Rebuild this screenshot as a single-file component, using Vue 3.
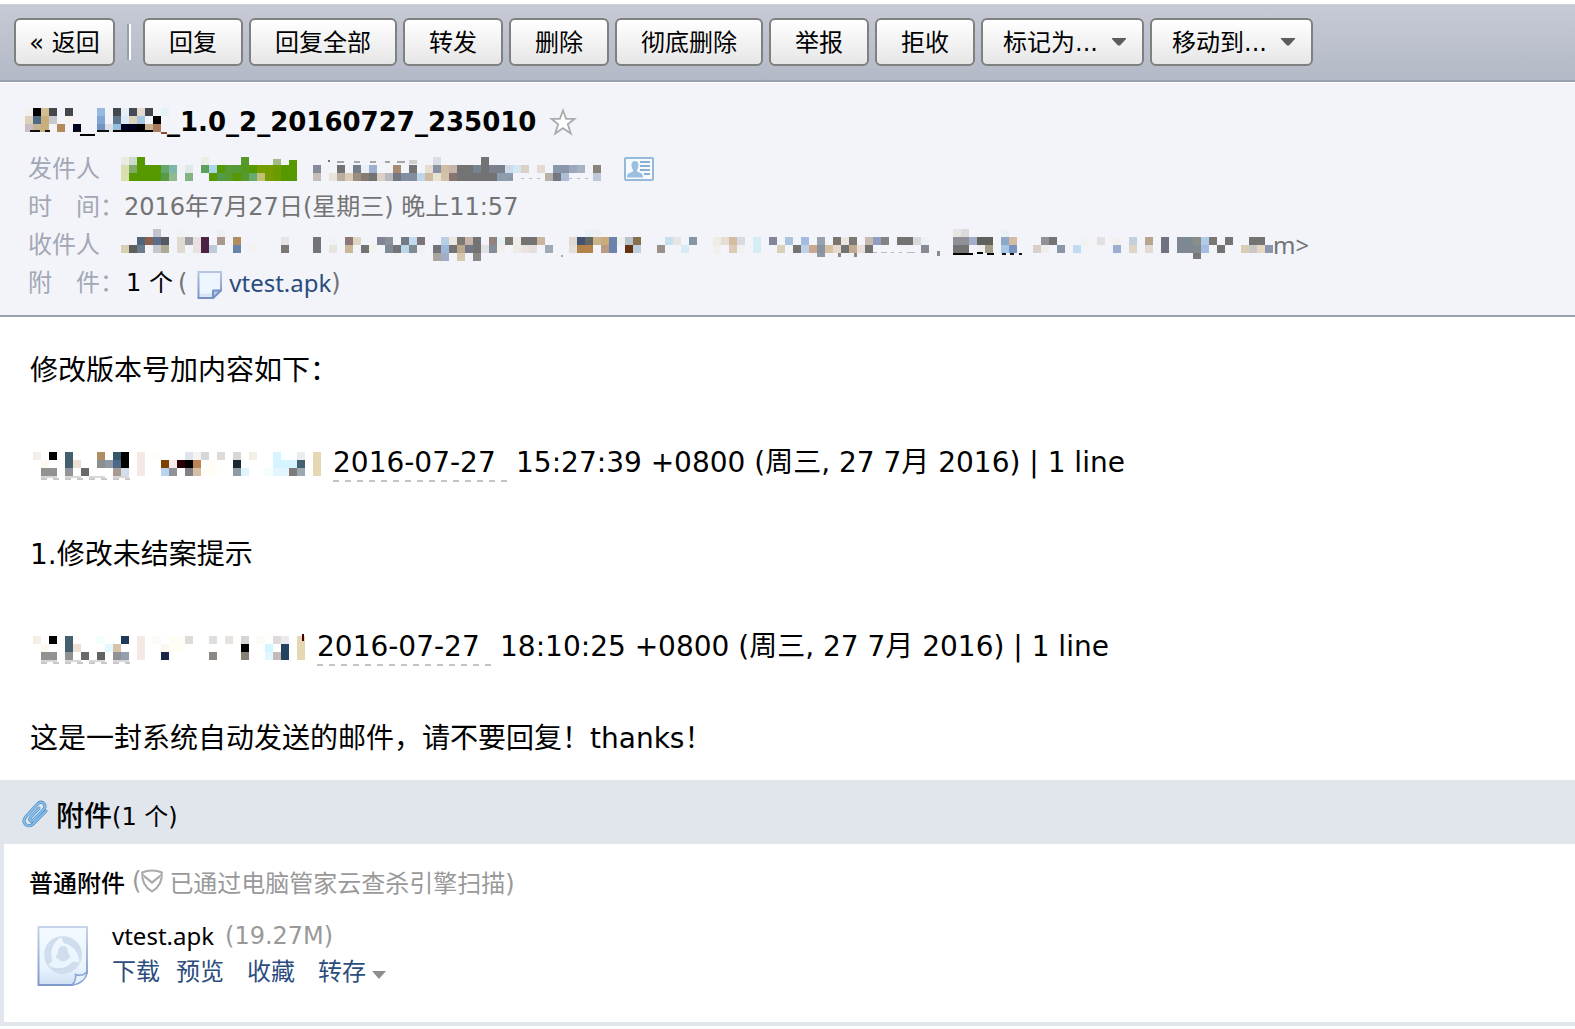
<script setup>
const CELL = 8

// Each row lists "column:colour", with an optional "*run" of repeated cells.
function mosaic(cols, rows, marks = []) {
  const cells = []
  rows.forEach((row, y) => {
    row.split(' ').filter(Boolean).forEach((token) => {
      const [col, rest] = token.split(':')
      const [color, run] = rest.split('*')
      cells.push({ x: col * CELL, y: y * CELL, w: (run || 1) * CELL, h: CELL, fill: '#' + color })
    })
  })
  marks.forEach(([x, y, w, h, fill]) => cells.push({ x, y, w, h, fill }))
  return { width: cols * CELL, height: rows.length * CELL, cells }
}

const subjectMask = mosaic(18, [
  '0:f2f1f0 1:000 2:d3bd92 3:44474b 5:44474b 9:98b9df 11:44474b 12:e6f0f6 13:444b55 14:e4dacf 15:44474b 17:e2f2f7',
  '0:ddd1bb 1:4d6b85 2:c9ae7c 3:c6c8cc 5:f4f1ee 9:82a5d6 11:5f7890 12:daebf5 13:dcd3bb 14:a6c7e2 16:000',
  '0:c9bec3 1:c5b393 2:c9ae7c 4:b58a5b 6:000020 9:7095c4 10:dcdfe6 11:97c0dc 12:000020*2 14:000 15:c6b08d 16:a57b5a',
], [
  [5, 22, 10, 2, '#111'], [20, 22, 5, 2, '#111'], [50, 22, 5, 2, '#111'],
  [55, 26, 15, 2, '#000'], [72, 22, 12, 2, '#111'], [88, 22, 40, 2, '#000'],
  [136, 24, 6, 2, '#8a4b2a'],
])

const senderMask = mosaic(60, [
  '0:e8ece3 1:cbdacb 2:559800 10:ebeee7 15:54992a 39:dadfe7 45:737373',
  '0:dadfae 1:7fab66 2:559800*3 5:64a66d 6:7cb5a9 7:f0f2f4 8:dfe9e8 10:5ca05e 11:a9d7e6 12:559800 13:569a38*2 15:549920 16:559800 17:759c00*2 19:6d9a00 20:559800*2 24:838c98 27:737373 29:747e8b 30:eaeff5 31:9cb1cf 34:a68b70 36:737373 38:e5ddd2 39:8991a5 40:d0bda5 41:c5b5a9 42:737373*2 44:75828f 45:737373 46:7b808d*2 48:cddbea 49:d3e8f1 50:dad0c6 52:e4dbd0 54:8999ad 55:8a93a7 56:9ba8bb 57:a7b3c5 59:89837a',
  '0:dadfae 1:559800*4 5:569c47 6:93b990 8:84b284 11:559800 12:539b48 13:569a2d 14:559800 15:569a2d 16:69a96d 17:c0c176 18:759c00 19:6d9a00 20:559800*2 24:c6bdb6 26:e9e4dc 27:b9aea0 28:dccab8 29:9c8e7e 30:867b70 31:737373 32:dbcfc8 33:b9babf 34:737880 35:828da0*2 37:bfd5ea 38:cdbca1 39:e6e3d3 40:d3c1a9 41:867572 42:737373*5 47:8d9dae*2 53:b8b1a9 54:74777f 55:adbdd9 59:bfc7d8',
], [
  [152, 2, 8, 6, '#a2bb86'], [168, 3, 8, 5, '#559800'],
  [207, 3, 2, 2, '#737373'], [216, 4, 7, 2, '#a5a6a8'], [233, 4, 6, 2, '#a5a6a8'],
  [249, 4, 6, 2, '#a5a6a8'], [264, 4, 5, 2, '#a5a6a8'], [276, 4, 8, 2, '#a5a6a8'], [288, 3, 8, 4, '#cfcfcd'],
  [388, 21, 4, 1, '#8d8d8d'], [400, 21, 3, 1, '#bbb'], [408, 21, 3, 1, '#bbb'], [416, 21, 3, 1, '#bbb'],
  [448, 21, 3, 1, '#bbb'], [456, 21, 3, 1, '#bbb'], [464, 21, 3, 1, '#bbb'],
])

const recipientMask = mosaic(144, [
  '4:c1c4cc 7:f0f2f4 12:eeeff0 58:e8f1f3 59:eeefef 104:e8e6e5 105:dcdada 110:eaf1f4',
  '2:4f6579 3:8b604e 4:5b6d8c 5:55585e 7:e0d9ce 8:9b9da2 9:e9e1df 10:4c2344 12:a9998f 14:b38d5d 20:e5e5e3 24:737379 26:eef2f6 28:8d7578 29:ded8c2 32:7f8592 33:89929b 35:737b87 36:c2daee 37:7b7376 40:b8cde6 41:ebe6df 42:7d7973 43:c7b5ac 44:737373 46:93827c 47:e4f1f5 48:7a7973 49:f0ece7 50:737373*2 52:ccb5a0 56:dfd9cf 57:435270 58:656564 59:cbb48c 60:c9ad7b 61:6b83ac 62:eeeeec 63:b8c3c9 64:876f4d 68:c7e0ef 69:e7e4e5 71:8696a9 74:efece6 75:e6ddd4 76:d3bda0 77:d8dae1 79:d6edf6 81:818796 83:a9c4de 85:a2bde0 87:98a2ae 89:7b7370 90:ebe6df 91:7b7873 93:c6bab3 94:929ebf 95:80837f 97:737373*2 99:d8d9d8 100:eaf1f5 104:8e9097 105:909194 106:a2aec9 107:5f615c*2 110:8ea8c7 111:d2bda3 115:909298 116:737373 120:eff2ee 122:e1dfe0 124:f1f0ee 126:c4d0d9 128:b9a48e 130:70737f 132:7f8892 133:7c8a96 134:8b8d88 135:b0cce6 136:7b7573 138:737373 141:737373*2',
  '0:d8d0b0 1:5d5e5d 2:687c8c 4:c4c6cc 5:adab91 7:e0d9ce 9:e9e1df 10:4c2344 11:bccada 14:6485a8 16:f2f3f1 20:7d7773 24:737379 26:e8e4de 28:cbb599 30:737373 31:f0f2ec 33:7f8c95 34:737379 35:bad6ea 36:7e8b92 37:eef0f4 39:737379 40:9fb8da 41:737373 42:bba68f 43:737884 44:737373 45:e0e2e5 46:848d98 47:f2efec 49:efece8 50:ebe4e0 51:e5dfdb 53:a1a9b5 56:e5dfd9 57:b3814a*2 60:ba9a80 61:6b83ac 63:63330f 64:bed0de 67:9a918a 70:d6edf5 74:f2f0ee 76:dccab6 77:eff1f2 79:d6edf6 82:dacfb9 84:737373 85:bfd1e8 86:c6a98e 87:8a93a0 88:d6c0a0 89:e6dad0 90:737373 91:c3ab92 92:e6dfdc 93:737373 100:868b93 104:737373*2 107:eeeeee 108:a19e8c 110:a6c8e6 111:7b93c0 114:d8d0c8 115:f0edea 117:8b95ab 119:bddcf0 124:9cadd0 126:ded5c8 128:e4dad5 130:70737f 132:7f8892*2 134:808a90 135:a4bde0 137:737373 140:d9cdb5 141:c8c6ca 142:e6d7c0 143:8c96ae',
  '39:a9a59f 40:a2abc8 42:d9c6ae 44:8a8887',
], [
  [696, 24, 8, 4, '#8d98a3'], [1072, 24, 8, 6, '#7b7878'],
  [440, 26, 2, 2, '#aaa'], [717, 24, 3, 4, '#888'], [733, 24, 3, 4, '#888'],
  [752, 23, 4, 1, '#bbb'], [760, 23, 6, 1, '#bbb'], [770, 23, 3, 1, '#bbb'], [778, 23, 3, 1, '#bbb'], [786, 23, 8, 1, '#bbb'],
  [816, 22, 3, 5, '#8a8a8a'],
  [832, 24, 20, 2, '#000'], [856, 23, 6, 2, '#000'], [866, 24, 7, 2, '#000'],
  [881, 24, 4, 2, '#111'], [889, 24, 4, 2, '#111'], [898, 24, 3, 2, '#111'],
])

const authorDashes = [
  [8, 24, 16, 2, '#d8d8d8'], [8, 26, 6, 2, '#c8c8c8'], [20, 26, 6, 2, '#c8c8c8'],
  [32, 24, 16, 2, '#d8d8d8'], [32, 26, 6, 2, '#c8c8c8'], [44, 26, 6, 2, '#c8c8c8'],
  [56, 24, 16, 2, '#d8d8d8'], [56, 26, 6, 2, '#c8c8c8'], [68, 26, 6, 2, '#c8c8c8'],
  [80, 24, 16, 2, '#d8d8d8'], [80, 26, 6, 2, '#c8c8c8'], [92, 26, 5, 2, '#c8c8c8'],
]

const commits = [
  {
    mask: mosaic(36, [
      '0:f5efec 2:000 4:445f70 5:fffefc 8:ae8d64 10:345769 11:000 13:f5e9e5 15:fdfcf7 19:dfe3ec 20:f7f3ee 21:d5d6da 23:e0dbd9 25:d7d7d7 27:f5efea 30:d8f4ff 31:fbffff*2 33:ebecee 35:e5d8b3',
      '1:fcf8f2 4:445f70 5:ece1d4 8:8c8f90 9:9097a5 10:4b6789 11:000 13:f5e9e5 16:7b4200 17:f5ebe8 18:280005 19:000 20:b98452 22:fffdf5 25:1c282f 30:d4f4ff*3 33:445f70 35:e5d8b3',
      '1:929292*2 3:fffdfa 4:929299 6:686a69 10:a89a90 11:d4ddee 13:f5e9e5 16:b8d3ed 17:909299 19:808086 20:d5bda8 21:fffdf5*2 25:909aa3 26:def5ff 29:f5fdff 30:e3f6ff*2 32:7f7b7c 33:9ea8b0 35:e5d8b3',
    ], authorDashes),
    date: '2016-07-27',
    rest: '15:27:39 +0800 (周三, 27 7月 2016) | 1 line',
    message: '1.修改未结案提示',
  },
  {
    mask: mosaic(34, [
      '0:f5efe8 2:000 4:445f70 5:fffefc 8:f2ffff 11:1d3858 13:f5e9e5 15:fcfcf7 17:fffef5*2 19:dfdbd8 22:e2dedb 24:e8e2df 26:d4d4d6 28:fcfbf5 30:e0dada 31:eaeaee 33:e5d8b3',
      '1:fcf8f2 4:445f70 5:ece1d4 9:e2faff 10:d6c3aa 13:f5e9e5 16:fbf6ef 17:fffef5*2 26:000 29:d4f4ff 31:234361 33:e5d8b3',
      '1:929292*2 3:fffdfa 4:929292 6:686a69 8:606265 10:8e9294 11:979fad 13:f5e9e5 16:172547 22:8c8782 26:878079 29:e2f8ff 30:c4b9b9 31:234361 33:e5d8b3',
    ], [...authorDashes, [269, -2, 2, 7, '#400']]),
    date: '2016-07-27',
    rest: '18:10:25 +0800 (周三, 27 7月 2016) | 1 line',
    message: '这是一封系统自动发送的邮件，请不要回复！thanks！',
  },
]

const actions = ['回复', '回复全部', '转发', '删除', '彻底删除', '举报', '拒收']
const menus = ['标记为...', '移动到...']
</script>

<template>
  <div class="mail">
    <nav class="toolbar">
      <button type="button" class="btn back">« 返回</button>
      <span class="divider"></span>
      <button v-for="a in actions" :key="a" type="button" class="btn">{{ a }}</button>
      <span v-for="m in menus" :key="m" class="menu">
        <select class="btn" :aria-label="m">
          <option>{{ m }}</option>
        </select>
        <svg class="caret" width="14" height="8" viewBox="0 0 14 8"><path d="M0 0H14V1L8 7.500H6L0 1Z" fill="#5c5c5c" /></svg>
      </span>
    </nav>

    <header class="head">
      <h1 class="subject">
        <svg class="mask" :width="subjectMask.width" :height="subjectMask.height">
          <rect v-for="(c, i) in subjectMask.cells" :key="i" :x="c.x" :y="c.y" :width="c.w" :height="c.h" :fill="c.fill" />
        </svg>
        <span class="subject-text">_1.0_2_20160727_235010</span>
        <svg class="star" width="28" height="28" viewBox="0 0 28 28">
          <path d="M14 2.500L17.100 10.800H25.500L18.800 16.200L21.800 25.500L14 20.200L6.200 25.500L9.200 16.200L2.500 10.800H10.900Z" fill="#fff" stroke="#a6adad" stroke-width="1.800" />
        </svg>
      </h1>
      <dl class="meta">
        <div class="row">
          <dt>发件人</dt>
          <dd>
            <svg class="mask" :width="senderMask.width" :height="senderMask.height">
              <rect v-for="(c, i) in senderMask.cells" :key="i" :x="c.x" :y="c.y" :width="c.w" :height="c.h" :fill="c.fill" />
            </svg>
            <svg class="card" width="30" height="24" viewBox="0 0 30 24">
              <rect x="1" y="1" width="28" height="22" rx="1" fill="#f7fafd" stroke="#94b9da" stroke-width="2" />
              <path d="M11 4C8.500 4 7.300 5.800 7.500 8.500C7.600 10.800 8.500 12 9 13V14.500L4.500 16.500C3.300 17.300 3 18.500 3 20.500H19C19 18.500 18.500 17.200 17.500 16.500L13 14.500V13C13.600 12 14.400 10.800 14.500 8.500C14.700 5.800 13.500 4 11 4Z" fill="#9bbfe0" />
              <path d="M16 5H26M16 9H26M16 13H26M20 17H26" stroke="#8ab0d1" stroke-width="2" />
            </svg>
          </dd>
        </div>
        <div class="row">
          <dt>时　间：</dt>
          <dd>2016年7月27日(星期三) 晚上11:57</dd>
        </div>
        <div class="row">
          <dt>收件人</dt>
          <dd>
            <svg class="mask" :width="recipientMask.width" :height="recipientMask.height">
              <rect v-for="(c, i) in recipientMask.cells" :key="i" :x="c.x" :y="c.y" :width="c.w" :height="c.h" :fill="c.fill" />
            </svg>
            <span class="latin">m&gt;</span>
          </dd>
        </div>
        <div class="row">
          <dt>附　件：</dt>
          <dd>
            <span class="count">1 个</span>
            <span class="paren">(</span>
            <svg class="sheet" width="26" height="30" viewBox="0 0 26 30">
              <defs>
                <linearGradient id="sheet-edge" x1="0" y1="0" x2="0" y2="1">
                  <stop offset="0" stop-color="#b5c6e3" /><stop offset="1" stop-color="#7590c6" />
                </linearGradient>
              </defs>
              <path d="M1.500 2H24V20L16 28H1.500Z" fill="#edf6fe" stroke="url(#sheet-edge)" stroke-width="2" />
              <path d="M3 24L15 23V27H3Z" fill="#d8e6f7" />
              <path d="M16 28V20.500H24Z" fill="#b9cbe7" stroke="#7892c6" stroke-width="2" stroke-linejoin="round" />
            </svg>
            <a href="#attachments" class="latin">vtest.apk</a><span>)</span>
          </dd>
        </div>
      </dl>
    </header>

    <main class="body">
      <p>修改版本号加内容如下：</p>
      <template v-for="(c, n) in commits" :key="n">
        <p class="commit">
          <svg class="mask" :width="c.mask.width" :height="c.mask.height">
            <rect v-for="(r, i) in c.mask.cells" :key="i" :x="r.x" :y="r.y" :width="r.w" :height="r.h" :fill="r.fill" />
          </svg>
          <span class="date">{{ c.date }}</span>
          <span>{{ c.rest }}</span>
        </p>
        <p>{{ c.message }}</p>
      </template>
    </main>

    <section id="attachments" class="attachments">
      <h2>
        <svg width="26" height="28" viewBox="0 0 26 28" fill="none" stroke-linecap="round">
          <path d="M17 8L8.500 17.500C6.500 20 9 22.500 11.300 20.500L22 9C25 5 20 0 16 3.500L4 16.500C-1 22.500 5 28.500 10.500 24.500L24 11" stroke="#4580b4" stroke-width="3" />
          <path d="M17 8L8.500 17.500C6.500 20 9 22.500 11.300 20.500L22 9C25 5 20 0 16 3.500L4 16.500C-1 22.500 5 28.500 10.500 24.500L24 11" stroke="#83bdec" stroke-width="2" />
        </svg>
        <span class="heading">附件</span><span class="total">(1 个)</span>
      </h2>
      <div class="panel">
        <div class="scan">
          <strong>普通附件</strong>
          <span class="paren">(</span>
          <svg width="22" height="24" viewBox="0 0 22 24" fill="none" stroke="#aaa" stroke-width="2">
            <path d="M11 1.500C14.500 1.500 18 2.200 20.800 3.500C21.300 12 18 18.500 11 22.500C4 18.500 .7 12 1.200 3.500C4 2.200 7.500 1.500 11 1.500Z" />
            <path d="M1.500 4.500L11 12L20.500 4.500L19 8.500L11 15L3 8.500Z" fill="#aaa" stroke="none" />
          </svg>
          <span>已通过电脑管家云查杀引擎扫描)</span>
        </div>
        <div class="file">
          <svg class="file-icon" width="52" height="62" viewBox="0 0 52 62">
            <defs>
              <linearGradient id="file-edge" x1="0" y1="0" x2="0" y2="1">
                <stop offset="0" stop-color="#c7d3ea" /><stop offset="1" stop-color="#7f98cb" />
              </linearGradient>
              <linearGradient id="file-fill" x1="0" y1="0" x2="0" y2="1">
                <stop offset="0" stop-color="#f3faff" /><stop offset=".7" stop-color="#e9f4fe" /><stop offset="1" stop-color="#cfdff3" />
              </linearGradient>
            </defs>
            <path d="M1.500 2H50V48C46 54 41 58 35 60H1.500Z" fill="url(#file-fill)" stroke="url(#file-edge)" stroke-width="2" stroke-linejoin="round" />
            <circle cx="26" cy="30" r="18" fill="none" stroke="#d3dfec" stroke-width="1.500" />
            <g fill="#d0ddec">
              <path id="blade" d="M24 12C14 12 7 20 7.500 30C7.800 34 9 37 11 39.500C15 38 16 35 14.500 31C13.500 24 17 17 24 12Z" />
              <path d="M24 12C14 12 7 20 7.500 30C7.800 34 9 37 11 39.500C15 38 16 35 14.500 31C13.500 24 17 17 24 12Z" transform="rotate(120 26 30)" />
              <path d="M24 12C14 12 7 20 7.500 30C7.800 34 9 37 11 39.500C15 38 16 35 14.500 31C13.500 24 17 17 24 12Z" transform="rotate(240 26 30)" />
              <path d="M26 21C22 21 21 24.500 21 27L18.500 33L21 33.500C21.500 37 30.500 37 31 33.500L33.500 33L31 27C31 24.500 30 21 26 21Z" />
            </g>
            <path d="M35 60C38.500 56 39 52.500 38.500 49.500C42.500 51 47 50 50 47C49.500 54 43 59.500 35 60Z" fill="#e6effa" stroke="#8ca4d2" stroke-width="1.500" />
          </svg>
          <div class="info">
            <div class="name"><span class="latin">vtest.apk</span><span class="size">(19.27M)</span></div>
            <div class="links">
              <a href="#download">下载</a>
              <a href="#preview">预览</a>
              <a href="#favorite">收藏</a>
              <a href="#save" class="save">转存<svg width="14" height="8" viewBox="0 0 14 8"><path d="M0 0H14L7 8Z" fill="#8e8e8e" /></svg></a>
            </div>
          </div>
        </div>
      </div>
    </section>
  </div>
</template>

<style>
body {
  margin: 0;
  background: #fff;
}
</style>

<style scoped>
.mail {
  padding-top: 4px;
  font-family: "DejaVu Sans", "Noto Sans CJK SC", sans-serif;
  font-size: 24px;
  color: #000;
  white-space: nowrap;
}
svg {
  flex: none;
  overflow: visible;
}
a {
  color: #2c4c7e;
  text-decoration: none;
}
.latin {
  font-family: "Noto Sans", "Noto Sans CJK SC", sans-serif;
}
.mask {
  shape-rendering: crispEdges;
}

.toolbar {
  display: flex;
  align-items: center;
  gap: 6px;
  height: 78px;
  padding: 0 14px 1px;
  box-sizing: border-box;
  border-top: 1px solid #d0d3da;
  border-bottom: 2px solid #98a0ab;
  background: linear-gradient(#c6cad5, #b3b9c6);
}
.btn {
  height: 48px;
  padding: 3px 24px 0;
  box-sizing: border-box;
  border: 2px solid #808080;
  border-radius: 6px;
  background: linear-gradient(#fff, #e6e6e6);
  font: inherit;
  line-height: 41px;
  color: #000;
}
.back {
  width: 101px;
  padding: 3px 0 0;
}
.divider {
  width: 2px;
  height: 36px;
  margin: 0 6px;
  border-left: 2px solid #989eaa;
  background: #fff;
}
.menu {
  position: relative;
}
.menu .btn {
  display: block;
  width: 163px;
  padding: 3px 20px 0;
  appearance: none;
}
.caret {
  position: absolute;
  right: 18px;
  top: 20px;
  pointer-events: none;
}

.head {
  padding: 20px 28px 13px;
  border-top: 1px solid #fff;
  border-bottom: 2px solid #9aa2ad;
  background: #f2f4f9;
}
.subject {
  display: flex;
  align-items: center;
  height: 38px;
  margin: 0 0 9px -3px;
  font-size: 26px;
  font-weight: bold;
}
.subject .mask {
  margin: 0 -2px 4px 0;
}
.star {
  margin-left: 13px;
}
.meta {
  margin: 0;
}
.row {
  display: flex;
  height: 38px;
  line-height: 38px;
}
dt {
  flex: 0 0 93px;
  color: #a2a7b5;
}
dd {
  display: flex;
  align-items: center;
  margin: 0;
  color: #737373;
}
.card {
  margin-left: 23px;
}
.count {
  margin-left: 2px;
  color: #000;
}
.count + .paren {
  margin: 0 10px 0 5px;
}
.sheet {
  margin: 4px 6px 0 0;
}

.body {
  padding: 31px 30px 18px;
  font-size: 28px;
  line-height: 46px;
}
.body p {
  height: 46px;
  margin: 0 0 46px;
}
.body p:last-child {
  margin-bottom: 0;
}
.commit {
  display: flex;
  align-items: center;
}
.commit .mask {
  margin: 2px 12px 0 3px;
}
.date {
  width: 174px;
  margin-right: 9px;
  background: repeating-linear-gradient(90deg, #c4c4c4 0 6px, transparent 6px 12px) 0 40px / 100% 2px no-repeat;
}

.attachments {
  background: #e1e5ec;
  padding: 0 0 4px 4px;
}
h2 {
  display: flex;
  align-items: center;
  height: 64px;
  margin: 0;
  padding: 4px 18px 0;
  box-sizing: border-box;
  font-size: 28px;
  font-weight: 500;
}
.heading {
  margin-left: 8px;
}
.total {
  font-size: 24px;
  font-weight: 400;
}
.panel {
  padding: 18px 25px 32px;
  background: #fff;
}
.scan {
  display: flex;
  align-items: center;
  height: 38px;
  color: #999;
}
.scan strong {
  font-weight: 500;
  color: #000;
}
.scan svg {
  margin: 0 6px 0 0;
}
.scan .paren {
  margin-left: 7px;
}
.file {
  display: flex;
  align-items: center;
  margin-top: 18px;
  padding-left: 8px;
}
.file-icon {
  margin-top: 4px;
}
.info {
  margin-left: 23px;
  line-height: 36px;
}
.name {
  display: flex;
  height: 36px;
}
.size {
  margin-left: 11px;
  color: #999;
}
.links {
  display: flex;
  gap: 23px;
  height: 36px;
}
.links a:first-child {
  margin-right: -7px;
}
.save {
  display: flex;
  align-items: center;
  gap: 6px;
}
.save svg {
  margin-top: 6px;
}
</style>
